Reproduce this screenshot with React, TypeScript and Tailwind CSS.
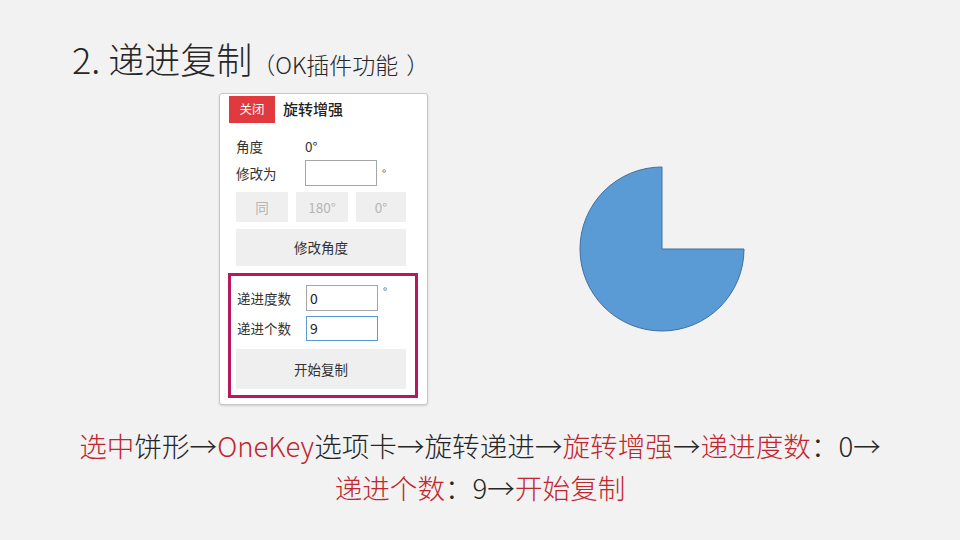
const cjk = "font-['Noto_Sans_CJK_SC','Noto_Sans',sans-serif]";

const Label = ({ text }: { text: string }) => (
  <span className="w-[69px] text-[13.5px] text-[#333]">{text}</span>
);

const Field = ({ value, focused }: { value?: string; focused?: boolean }) => (
  <div
    className={
      focused
        ? "w-[72px] h-[25px] bg-white border border-[#5b9bd5] px-[3px] text-[14px] leading-[23px] text-[#222]"
        : "w-[72px] h-[26px] bg-white border border-[#a6a6a6] px-[3px] text-[14px] leading-[24px] text-[#222]"
    }
  >
    {value}
  </div>
);

const RotatePanel = () => {
  return (
    <div className="ml-[219px] w-[209px] h-[312px] bg-white border border-[#c8c8c8] rounded-[3px] shadow-[0_1px_2px_rgba(0,0,0,0.15)] flex flex-col">
      <div className="flex flex-row items-center mt-[2px] ml-[9px]">
        <div className="w-[46px] h-[27px] bg-[#e0393e] text-white text-[12.5px] flex items-center justify-center">
          关闭
        </div>
        <span className="ml-[8px] text-[15px] font-medium text-[#222]">旋转增强</span>
      </div>
      <div className="flex flex-col pl-[16px] pr-[21px]">
        <div className="flex flex-row items-center h-[20px] mt-[13px]">
          <Label text="角度" />
          <span className="text-[13.5px] text-[#333]">0°</span>
        </div>
        <div className="flex flex-row items-center mt-[4px]">
          <Label text="修改为" />
          <Field />
          <span className="ml-[5px] text-[11px] text-[#444]">°</span>
        </div>
        <div className="flex flex-row gap-[8px] mt-[6px]">
          <div className="w-[52px] h-[30px] bg-[#efefef] text-[#b5b5b5] text-[13.5px] flex items-center justify-center">同</div>
          <div className="w-[52px] h-[30px] bg-[#efefef] text-[#b5b5b5] text-[13.5px] flex items-center justify-center">180°</div>
          <div className="w-[50px] h-[30px] bg-[#efefef] text-[#b5b5b5] text-[13.5px] flex items-center justify-center">0°</div>
        </div>
        <div className="w-[170px] h-[37px] mt-[7px] bg-[#efefef] text-[#333] text-[13.5px] flex items-center justify-center">
          修改角度
        </div>
      </div>
      <div className="ml-[8px] mt-[7px] w-[190px] h-[125px] border-[3px] border-[#b8185f] flex flex-col pl-[6px] pt-[9px]">
        <div className="flex flex-row items-center">
          <Label text="递进度数" />
          <Field value="0" />
          <span className="ml-[5px] text-[11px] self-start -mt-[2px] text-[#444]">°</span>
        </div>
        <div className="flex flex-row items-center mt-[5px]">
          <Label text="递进个数" />
          <Field value="9" focused />
        </div>
        <div className="w-[170px] h-[40px] mt-[8px] -ml-[1px] bg-[#efefef] text-[#333] text-[13.5px] flex items-center justify-center">
          开始复制
        </div>
      </div>
    </div>
  );
};

const Pie = () => (
  <svg width="168" height="168" viewBox="0 0 168 168" className="ml-[150px] mt-[72px]">
    <path d="M84 84 L84 2 A82 82 0 1 0 166 84 Z" fill="#5b9bd5" stroke="#41719c" strokeWidth="1" />
  </svg>
);

export default function App() {
  return (
    <div className={`w-[960px] h-[540px] bg-[#f2f2f2] flex flex-col overflow-hidden ${cjk}`}>
      <div className="pt-[40px] pl-[72px] flex flex-row items-baseline text-[#262626] font-light">
        <span className="text-[36px] leading-[36px]">2. 递进复制</span>
        <span className="text-[23px] leading-[23px]">（OK插件功能</span>
        <span className="text-[23px] leading-[23px] ml-[8px]">）</span>
      </div>
      <div className="flex flex-row mt-[17px]">
        <RotatePanel />
        <Pie />
      </div>
      <div className="mt-[19px] flex flex-col items-center text-[27.6px] leading-[42px] text-[#262626] font-light">
        <p>
          <span className="text-[#c0262d]">选中</span>饼形→<span className="text-[#c0262d]">OneKey</span>选项卡→旋转递进→
          <span className="text-[#c0262d]">旋转增强</span>→<span className="text-[#c0262d]">递进度数</span>：0→
        </p>
        <p>
          <span className="text-[#c0262d]">递进个数</span>：9→<span className="text-[#c0262d]">开始复制</span>
        </p>
      </div>
    </div>
  );
}
